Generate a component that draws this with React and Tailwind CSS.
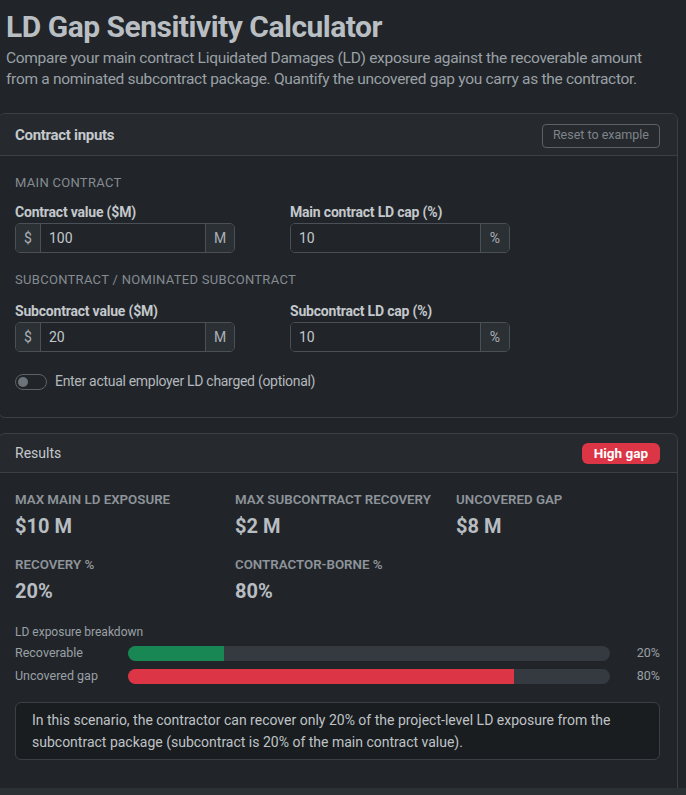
import { useState } from "react";

const font = { fontFamily: '"Roboto", "Liberation Sans", sans-serif' };

function InputGroup({ prefix, value, suffix }) {
  return (
    <div className="flex h-[30px] w-[220px] rounded-[5px] border border-[#495057] overflow-hidden text-[14px]">
      {prefix && (
        <div className="w-[25px] flex items-center justify-center bg-[#2b3035] border-r border-[#495057] text-[#aab0b6]">
          {prefix}
        </div>
      )}
      <div className="flex-1 flex items-center px-[8px] bg-[#212529] text-[#c3c7cb]">{value}</div>
      <div className="w-[29px] flex items-center justify-center bg-[#2b3035] border-l border-[#495057] text-[#aab0b6]">
        {suffix}
      </div>
    </div>
  );
}

function Field({ label, prefix, value, suffix }) {
  return (
    <div>
      <div className="text-[14px] font-bold text-[#c4c8cc] leading-[20px] tracking-[-0.2px] mb-[1px]">{label}</div>
      <InputGroup prefix={prefix} value={value} suffix={suffix} />
    </div>
  );
}

function Stat({ label, value }) {
  return (
    <div>
      <div className="text-[13.3px] font-semibold uppercase text-[#8e949a] leading-[18px]">{label}</div>
      <div className="text-[20px] font-bold text-[#b8bdc2] leading-[26px] mt-[4px]">{value}</div>
    </div>
  );
}

function Bar({ label, pct, color }) {
  return (
    <div className="flex items-center h-[23px]">
      <div className="w-[113px] text-[12.5px] text-[#9aa0a6]">{label}</div>
      <div className="w-[482px] h-[15px] rounded-full bg-[#343a40] overflow-hidden">
        <div className={`h-full ${color}`} style={{ width: `${pct}%` }} />
      </div>
      <div className="flex-1 text-right text-[12.5px] text-[#9aa0a6]">{pct}%</div>
    </div>
  );
}

export default function App() {
  const [on, setOn] = useState(false);
  return (
    <div className="min-h-screen bg-[#212529] text-[#c0c4c8]" style={font}>
      <div className="pl-[6px] pt-[9px]">
        <h1 className="text-[30px] font-bold text-[#b9bec3] leading-[36px] tracking-[-0.5px]">
          LD Gap Sensitivity Calculator
        </h1>
        <p className="mt-[3px] text-[15.5px] leading-[21px] tracking-[-0.3px] text-[#9aa0a6] w-[670px]">
          Compare your main contract Liquidated Damages (LD) exposure against the recoverable amount
          <br />
          from a nominated subcontract package. Quantify the uncovered gap you carry as the contractor.
        </p>
      </div>

      <div className="mt-[23px] w-[680px] -ml-[2px] rounded-[7px] border border-[#3b4046]">
        <div className="h-[42px] flex items-center justify-between pl-[16px] pr-[17px] pt-[2px] bg-[#262a2e] border-b border-[#3b4046] rounded-t-[7px]">
          <div className="text-[15px] font-bold text-[#c4c8cc] tracking-[-0.3px]">Contract inputs</div>
          <button className="h-[24px] px-[10px] rounded-[4px] border border-[#5b6167] text-[12.5px] text-[#7d848a]">
            Reset to example
          </button>
        </div>
        <div className="pl-[16px] pt-[18px] pb-[25px]">
          <div className="text-[13px] uppercase text-[#858b91] tracking-[0.3px] leading-[18px]">Main contract</div>
          <div className="mt-[10px] grid grid-cols-[220px_220px] gap-x-[55px]">
            <Field label="Contract value ($M)" prefix="$" value="100" suffix="M" />
            <Field label="Main contract LD cap (%)" value="10" suffix="%" />
          </div>
          <div className="mt-[18px] text-[13px] uppercase text-[#858b91] tracking-[0.3px] leading-[18px]">
            Subcontract / nominated subcontract
          </div>
          <div className="mt-[12px] grid grid-cols-[220px_220px] gap-x-[55px]">
            <Field label="Subcontract value ($M)" prefix="$" value="20" suffix="M" />
            <Field label="Subcontract LD cap (%)" value="10" suffix="%" />
          </div>
          <div className="mt-[19px] flex items-center gap-[8px]">
            <button
              onClick={() => setOn(!on)}
              className={`w-[32px] h-[16px] rounded-full border border-[#5b6167] flex items-center px-[2px] ${on ? "justify-end bg-[#0d6efd]" : "justify-start"}`}
            >
              <span className="w-[10px] h-[10px] rounded-full bg-[#6c737a]" />
            </button>
            <span className="text-[14px] tracking-[-0.3px] text-[#b3b8bd]">Enter actual employer LD charged (optional)</span>
          </div>
        </div>
      </div>

      <div className="mt-[15px] w-[680px] -ml-[2px] rounded-t-[7px] border border-b-0 border-[#3b4046]">
        <div className="h-[39px] flex items-center justify-between pl-[16px] pr-[17px] bg-[#262a2e] border-b border-[#3b4046] rounded-t-[7px]">
          <div className="text-[14px] text-[#c4c8cc]">Results</div>
          <span className="h-[21px] px-[12px] flex items-center rounded-[6px] bg-[#dc3545] text-white text-[13.5px] font-bold">
            High gap
          </span>
        </div>
        <div className="pl-[16px] pr-[17px] pt-[18px] pb-[28px]">
          <div className="grid grid-cols-[220px_221px_220px] gap-y-[17px]">
            <Stat label="Max main LD exposure" value="$10 M" />
            <Stat label="Max subcontract recovery" value="$2 M" />
            <Stat label="Uncovered gap" value="$8 M" />
            <Stat label="Recovery %" value="20%" />
            <Stat label="Contractor-borne %" value="80%" />
          </div>
          <div className="mt-[19px] text-[12px] text-[#9aa0a6]">LD exposure breakdown</div>
          <div className="mt-[1px]">
            <Bar label="Recoverable" pct={20} color="bg-[#198754]" />
            <Bar label="Uncovered gap" pct={80} color="bg-[#dc3545]" />
          </div>
          <div className="mt-[14px] rounded-[6px] border border-[#3b4046] bg-[#1a1d20] px-[16px] py-[6px] text-[14px] leading-[22px] text-[#bfc3c7]">
            In this scenario, the contractor can recover only 20% of the project-level LD exposure from the subcontract
            package (subcontract is 20% of the main contract value).
          </div>
        </div>
      </div>
      <div className="h-[10px] bg-[#2b3035]" />
    </div>
  );
}
